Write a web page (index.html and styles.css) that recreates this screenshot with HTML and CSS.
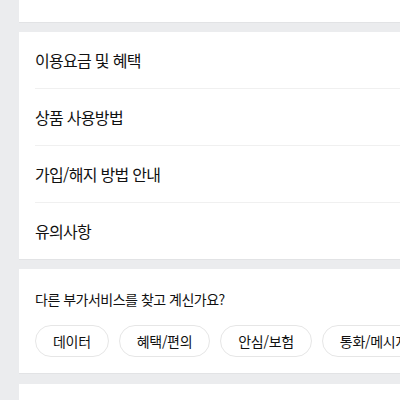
FILE: index.html
```html
<!DOCTYPE html>
<html lang="ko">
<head>
<meta charset="utf-8">
<link rel="stylesheet" href="styles.css">
</head>
<body>
<div class="page">
  <section class="card card-top"></section>
  <section class="card menu">
    <div class="menu-item">이용요금 및 혜택</div>
    <div class="menu-item">상품 사용방법</div>
    <div class="menu-item">가입/해지 방법 안내</div>
    <div class="menu-item">유의사항</div>
  </section>
  <section class="card other">
    <h2 class="other-title">다른 부가서비스를 찾고 계신가요?</h2>
    <div class="chips">
      <span class="chip">데이터</span>
      <span class="chip">혜택/편의</span>
      <span class="chip">안심/보험</span>
      <span class="chip">통화/메시지</span>
      <span class="chip">기타</span>
    </div>
  </section>
  <section class="card card-bottom"></section>
</div>
</body>
</html>
```

FILE: styles.css
```css
html, body {
  margin: 0;
  padding: 0;
  background: #ebecee;
  overflow: hidden;
}
body {
  font-family: "Noto Sans CJK KR", "Noto Sans", sans-serif;
  color: #111;
}
.page {
  padding-left: 19px;
  width: 420px;
}
.card {
  background: #fff;
  border-bottom: 1px solid #e2e3e5;
  margin-bottom: 9px;
}
.card-top {
  height: 22px;
}
.menu {
  padding-left: 16px;
}
.menu-item {
  height: 56px;
  display: flex;
  align-items: center;
  font-size: 16px;
  letter-spacing: -0.7px;
  color: #111;
}
.menu-item + .menu-item {
  border-top: 1px solid #f0f0f0;
}
.other {
  padding: 20px 0 16px 16px;
  margin-bottom: 10px;
}
.other-title {
  margin: 0 0 16px;
  font-size: 14px;
  font-weight: 400;
  line-height: 20px;
  letter-spacing: -0.5px;
  color: #111;
}
.chips {
  display: flex;
  gap: 10px;
  flex-wrap: nowrap;
  overflow: hidden;
}
.chip {
  flex: none;
  height: 30px;
  line-height: 30px;
  padding: 0 17px;
  border: 1px solid #e6e6e6;
  border-radius: 16px;
  font-size: 14px;
  letter-spacing: -0.3px;
  color: #111;
  white-space: nowrap;
}
.card-bottom {
  height: 40px;
}
```
